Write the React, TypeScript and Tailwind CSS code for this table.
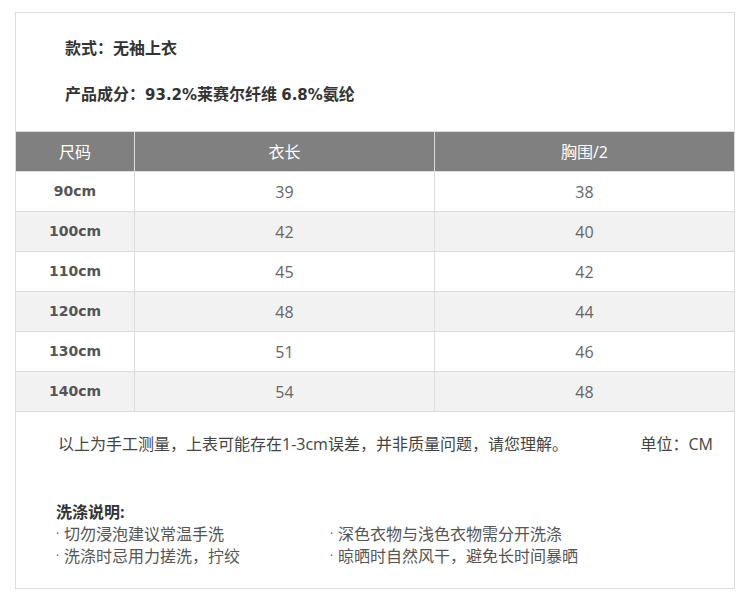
const rows = [
  { size: "90cm", len: "39", chest: "38" },
  { size: "100cm", len: "42", chest: "40" },
  { size: "110cm", len: "45", chest: "42" },
  { size: "120cm", len: "48", chest: "44" },
  { size: "130cm", len: "51", chest: "46" },
  { size: "140cm", len: "54", chest: "48" },
];

const washTips = [
  "切勿浸泡建议常温手洗",
  "深色衣物与浅色衣物需分开洗涤",
  "洗涤时忌用力搓洗，拧绞",
  "晾晒时自然风干，避免长时间暴晒",
];

const num = "font-['DejaVu_Sans',sans-serif] text-[14px]";

export default function App() {
  return (
    <div className="w-[750px] h-[601px] bg-white pt-[12px] pl-[15px] font-['Open_Sans','Noto_Sans_CJK_SC',sans-serif]">
      <div className="w-[720px] h-[577px] border border-[#dcdcdc]">
        {/* 基本信息 */}
        <div className="pl-[49px] pt-[23px] text-[16px] leading-[24px] font-semibold text-[#333]">
          <p className="h-[24px]">款式：无袖上衣</p>
          <p className="mt-[22px] h-[24px] flex items-baseline whitespace-pre">
            <span>产品成分：</span>
            <span className="font-['DejaVu_Sans',sans-serif] text-[15px] font-bold leading-[24px]">93.2%</span>
            <span>莱赛尔纤维 </span>
            <span className="font-['DejaVu_Sans',sans-serif] text-[15px] font-bold leading-[24px]">6.8%</span>
            <span>氨纶</span>
          </p>
        </div>

        {/* 尺码表 */}
        <div className="mt-[25px] border-t border-[#dcdcdc]">
          <div className="grid grid-cols-[118px_300px_1fr] h-[40px] bg-[#808080] text-white text-[16px] border-b border-[#dcdcdc]">
            <div className="flex items-center justify-center">尺码</div>
            <div className="flex items-center justify-center border-l border-[#dcdcdc]">衣长</div>
            <div className="flex items-center justify-center border-l border-[#dcdcdc]">胸围/2</div>
          </div>
          {rows.map((r, i) => (
            <div
              key={r.size}
              className={`grid grid-cols-[118px_300px_1fr] h-[40px] text-[16px] border-b border-[#dcdcdc] ${
                i % 2 === 1 ? "bg-[#f2f2f2]" : "bg-white"
              }`}
            >
              <div className={`flex items-center justify-center font-bold text-[#555] ${num}`}>{r.size}</div>
              <div className="flex items-center justify-center border-l border-[#dcdcdc] text-[#666]">{r.len}</div>
              <div className="flex items-center justify-center border-l border-[#dcdcdc] text-[#666]">{r.chest}</div>
            </div>
          ))}
        </div>

        {/* 测量说明 */}
        <div className="mt-[20px] pl-[42px] pr-[21px] flex justify-between text-[16px] leading-[24px] text-[#444]">
          <span>以上为手工测量，上表可能存在1-3cm误差，并非质量问题，请您理解。</span>
          <span>单位：CM</span>
        </div>

        {/* 洗涤说明 */}
        <div className="mt-[45px] pl-[40px] text-[16px] leading-[22px] text-[#555]">
          <p className="font-bold text-[#333]">洗涤说明:</p>
          <div className="grid grid-cols-[274px_1fr]">
            {washTips.map((t) => (
              <p key={t} className="flex">
                <span className="w-[8px] shrink-0 text-[12px]">·</span>
                <span>{t}</span>
              </p>
            ))}
          </div>
        </div>
      </div>
    </div>
  );
}
